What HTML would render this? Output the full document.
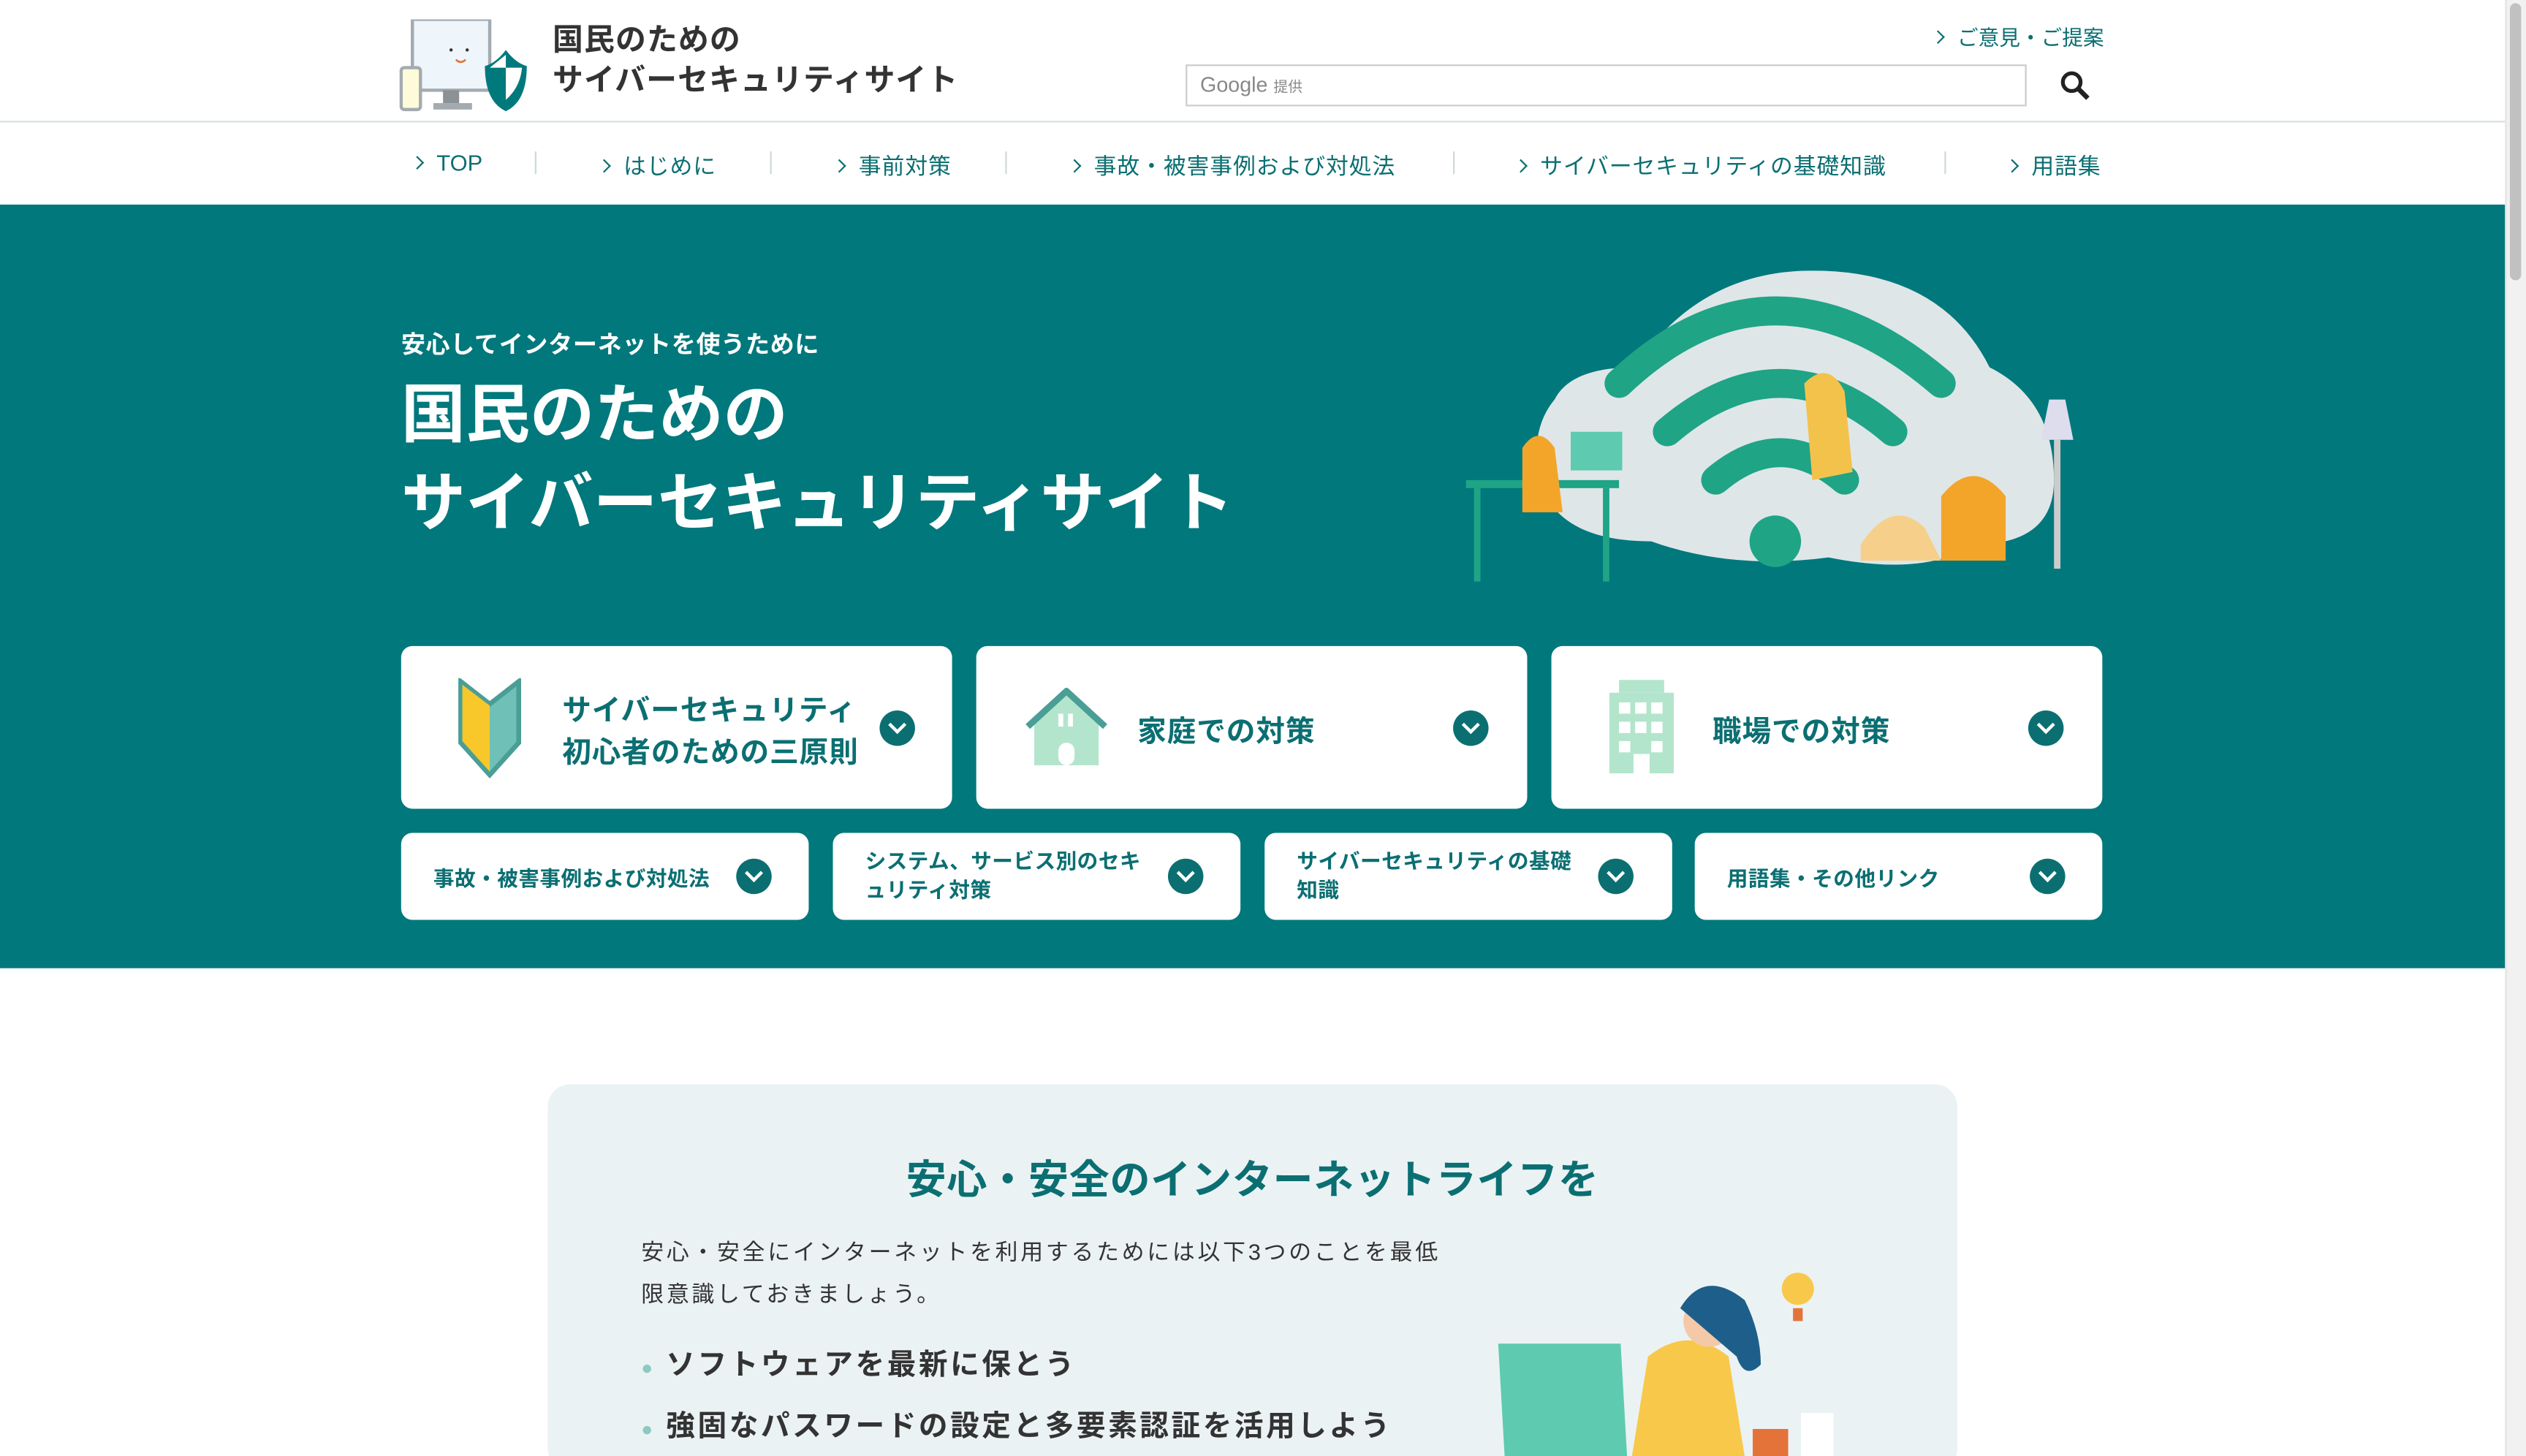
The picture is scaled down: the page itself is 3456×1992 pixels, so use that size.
<!DOCTYPE html>
<html lang="ja"><head><meta charset="utf-8">
<style>
html,body{margin:0;padding:0;width:3456px;height:1992px;overflow:hidden;background:#fff}
#w{width:1568px;height:904px;transform:scale(2.20408);transform-origin:0 0;position:relative;font-family:"Liberation Sans","Noto Sans CJK JP",sans-serif;color:#333}
.a{position:absolute}
.nav{color:#0b6f72;font-size:14px;white-space:nowrap}
.nav i{display:inline-block;width:5px;height:5px;border-right:1.6px solid #0b6f72;border-top:1.6px solid #0b6f72;transform:rotate(45deg);margin-right:9px;vertical-align:2px}
.sep{position:absolute;top:94px;width:1px;height:14px;background:#cfd8da}
.card{position:absolute;background:#fff;border-radius:7px}
.ct{position:absolute;color:#0b6f72;font-weight:bold}
.chev{position:absolute;width:22px;height:22px;border-radius:50%;background:#0b6f72}
.chev:after{content:"";position:absolute;left:7px;top:5px;width:6px;height:6px;border-right:2px solid #fff;border-bottom:2px solid #fff;transform:rotate(45deg)}
</style></head><body><div id="w">
<div class="a" style="left:0;top:0;width:1555px;height:75px;border-bottom:1.5px solid #d6dfe1"></div>
<svg class="a" style="left:248px;top:12px" width="84" height="58" viewBox="0 0 84 58">
<rect x="8" y="0" width="48" height="44" fill="#eef6fc" stroke="#a4abb0" stroke-width="2"/>
<rect x="27" y="44" width="10" height="8" fill="#8a9296"/><rect x="21" y="52" width="24" height="4" fill="#a4abb0"/>
<rect x="1" y="30" width="12" height="26" rx="2" fill="#fdfbd9" stroke="#a4abb0" stroke-width="2"/>
<circle cx="32" cy="19" r="1" fill="#333"/><circle cx="42" cy="19" r="1" fill="#333"/>
<path d="M35 25 q3 3 6 0" stroke="#e4733a" fill="none" stroke-width="1.2"/>
<path d="M66 19 q-6 8 -13 10 q0 22 13 28 q13-6 13-28 q-7-2 -13-10z" fill="#00797d"/>
<path d="M66 30 h10 q-1 12 -10 20z M56 30 h10 v-8z" fill="#fff"/>
</svg>
<div class="a" style="left:343px;top:13px;font-size:19px;font-weight:bold;line-height:25px;color:#333;letter-spacing:.5px">国民のための<br>サイバーセキュリティサイト</div>
<div class="a nav" style="left:1200px;top:13px;font-size:13px"><i></i>ご意見・ご提案</div>
<div class="a" style="left:736px;top:40px;width:520px;height:24px;border:1px solid #ccc;background:#fff"><span style="position:absolute;left:8px;top:4px;font-size:13px;color:#888">Google <span style="font-size:9px">提供</span></span></div>
<svg class="a" style="left:1278px;top:43px" width="20" height="20" viewBox="0 0 20 20"><circle cx="8" cy="8" r="5.5" stroke="#222" stroke-width="2.4" fill="none"/><path d="M12 12 L18 18" stroke="#222" stroke-width="3"/></svg>
<div class="a nav" style="left:256px;top:93px"><i></i>TOP</div>
<div class="sep" style="left:332px"></div>
<div class="a nav" style="left:372px;top:93px;letter-spacing:.4px"><i></i>はじめに</div>
<div class="sep" style="left:478px"></div>
<div class="a nav" style="left:518px;top:93px;letter-spacing:.4px"><i></i>事前対策</div>
<div class="sep" style="left:624px"></div>
<div class="a nav" style="left:664px;top:93px;letter-spacing:.4px"><i></i>事故・被害事例および対処法</div>
<div class="sep" style="left:902px"></div>
<div class="a nav" style="left:941px;top:93px;letter-spacing:.4px"><i></i>サイバーセキュリティの基礎知識</div>
<div class="sep" style="left:1207px"></div>
<div class="a nav" style="left:1246px;top:93px;letter-spacing:.4px"><i></i>用語集</div>
<div class="a" style="left:0;top:127px;width:1555px;height:474px;background:#00787c"></div>
<div class="a" style="left:249px;top:203px;color:#fff;font-size:15px;font-weight:bold;letter-spacing:.3px">安心してインターネットを使うために</div>
<div class="a" style="left:249px;top:231px;color:#fff;font-size:40px;font-weight:bold;line-height:55px;letter-spacing:0">国民のための<br>サイバーセキュリティサイト</div>
<svg class="a" style="left:905px;top:168px" width="400" height="200" viewBox="0 0 400 200">
<path d="M60 80 q10-20 50-20 q40-60 110-60 q80 0 110 60 q40 20 40 70 q0 40-50 40 q-30 20-90 8 q-60 8-110-10 q-60 0-70-40 q-5-30 10-48z" fill="#dfe6e8"/>
<path d="M100 70 q95-90 200 0" stroke="#1fa486" stroke-width="18" fill="none" stroke-linecap="round"/>
<path d="M130 100 q70-60 140 0" stroke="#1fa486" stroke-width="18" fill="none" stroke-linecap="round"/>
<path d="M160 130 q40-34 80 0" stroke="#1fa486" stroke-width="18" fill="none" stroke-linecap="round"/>
<circle cx="197" cy="168" r="16" fill="#1fa486"/>
<rect x="5" y="130" width="95" height="5" fill="#1fa486"/><rect x="10" y="135" width="4" height="58" fill="#1fa486"/><rect x="90" y="135" width="4" height="58" fill="#1fa486"/>
<rect x="70" y="100" width="32" height="24" fill="#5ecbb0"/>
<path d="M40 110 q10-15 20 0 l5 40 l-25 0z" fill="#f3a52a"/>
<path d="M215 70 q15-15 25 5 l5 50 l-25 5z" fill="#f3c24a"/>
<path d="M300 140 q20-25 40 0 v40 h-40z" fill="#f3a52a"/>
<path d="M250 170 q20-30 40-10 l10 20 h-50z" fill="#f6d08a"/>
<rect x="370" y="105" width="4" height="80" fill="#ccc"/><path d="M362 105 l5-25 h10 l5 25z" fill="#dde"/>
</svg>
<div class="card" style="left:249px;top:401px;width:342px;height:101px"></div>
<svg class="a" style="left:283px;top:421px" width="42" height="62" viewBox="0 0 42 62"><path d="M3 2 L21 16 L39 2 V40 L21 60 L3 40z" fill="#6fc1b7" stroke="#4a9e95" stroke-width="3"/><path d="M4 4 L21 17 V58 L4 39z" fill="#f8c72a"/></svg>
<div class="ct" style="left:349px;top:428px;font-size:18px;line-height:26px;letter-spacing:.4px">サイバーセキュリティ<br>初心者のための三原則</div>
<div class="chev" style="left:546px;top:441px"></div>
<div class="card" style="left:606px;top:401px;width:342px;height:101px"></div>
<svg class="a" style="left:636px;top:427px" width="52" height="50" viewBox="0 0 52 50"><path d="M6 20 L26 2 L46 20 V48 H6z" fill="#b3e5cd"/><path d="M2 24 L26 2 L50 24" stroke="#4a9e95" stroke-width="4" fill="none"/><rect x="21" y="34" width="10" height="14" rx="5" fill="#fff"/><rect x="21" y="16" width="3" height="8" fill="#fff"/><rect x="27" y="16" width="3" height="8" fill="#fff"/></svg>
<div class="ct" style="left:706px;top:440px;font-size:18px;letter-spacing:.4px">家庭での対策</div>
<div class="chev" style="left:902px;top:441px"></div>
<div class="card" style="left:963px;top:401px;width:342px;height:101px"></div>
<svg class="a" style="left:997px;top:422px" width="44" height="58" viewBox="0 0 44 58"><rect x="2" y="8" width="40" height="50" fill="#b3e5cd"/><rect x="8" y="0" width="28" height="8" fill="#b3e5cd"/><g fill="#fff"><rect x="8" y="14" width="7" height="7"/><rect x="18" y="14" width="7" height="7"/><rect x="28" y="14" width="7" height="7"/><rect x="8" y="26" width="7" height="7"/><rect x="18" y="26" width="7" height="7"/><rect x="28" y="26" width="7" height="7"/><rect x="8" y="38" width="7" height="7"/><rect x="28" y="38" width="7" height="7"/><rect x="17" y="46" width="10" height="12"/></g></svg>
<div class="ct" style="left:1063px;top:440px;font-size:18px;letter-spacing:.4px">職場での対策</div>
<div class="chev" style="left:1259px;top:441px"></div>
<div class="card" style="left:249px;top:517px;width:253px;height:54px"></div>
<div class="ct" style="left:269px;top:535px;font-size:13px;letter-spacing:.2px">事故・被害事例および対処法</div>
<div class="chev" style="left:457px;top:533px"></div>
<div class="card" style="left:517px;top:517px;width:253px;height:54px"></div>
<div class="ct" style="left:537px;top:526px;font-size:13px;line-height:18px;letter-spacing:.2px">システム、サービス別のセキ<br>ュリティ対策</div>
<div class="chev" style="left:725px;top:533px"></div>
<div class="card" style="left:785px;top:517px;width:253px;height:54px"></div>
<div class="ct" style="left:805px;top:526px;font-size:13px;line-height:18px;letter-spacing:.2px">サイバーセキュリティの基礎<br>知識</div>
<div class="chev" style="left:992px;top:533px"></div>
<div class="card" style="left:1052px;top:517px;width:253px;height:54px"></div>
<div class="ct" style="left:1072px;top:535px;font-size:13px;letter-spacing:.2px">用語集・その他リンク</div>
<div class="chev" style="left:1260px;top:533px"></div>
<div class="a" style="left:340px;top:673px;width:875px;height:240px;background:#ebf2f4;border-radius:14px"></div>
<div class="a" style="left:340px;top:713px;width:875px;text-align:center;color:#0b6f72;font-size:25px;font-weight:bold;letter-spacing:.3px">安心・安全のインターネットライフを</div>
<div class="a" style="left:398px;top:764px;font-size:14px;line-height:26px;color:#333;letter-spacing:1.7px">安心・安全にインターネットを利用するためには以下3つのことを最低<br>限意識しておきましょう。</div>
<div class="a" style="left:398px;top:829px;font-size:18px;font-weight:bold;line-height:36px;color:#333;letter-spacing:1.6px"><span style="color:#8cc9c0;font-size:12px">●</span> ソフトウェアを最新に保とう<br><span style="color:#8cc9c0;font-size:12px">●</span> 強固なパスワードの設定と多要素認証を活用しよう</div>
<svg class="a" style="left:928px;top:772px" width="220" height="132" viewBox="0 0 220 132">
<path d="M2 62 h76 l4 70 h-76z" fill="#5ecbb0"/>
<path d="M95 70 q25-20 50 0 l10 62 h-70z" fill="#f8c84a"/>
<circle cx="133" cy="48" r="16" fill="#f3c9a8"/><path d="M115 40 q15-25 40-5 q10 20 10 40 q-10 10-15-5z" fill="#1d5f8a"/>
<circle cx="188" cy="28" r="10" fill="#f8c84a"/><path d="M185 40 h6 v8 h-6z" fill="#e4733a"/>
<path d="M190 105 h20 v27 h-20z" fill="#fff"/><rect x="160" y="115" width="22" height="17" fill="#e4733a"/>
</svg>
<div class="a" style="left:1555px;top:0;width:13px;height:904px;background:#f1f1f1;border-left:1px solid #e4e4e4"></div>
<div class="a" style="left:1558px;top:2px;width:7px;height:172px;background:#c1c1c1;border-radius:4px"></div>
</div></body></html>
